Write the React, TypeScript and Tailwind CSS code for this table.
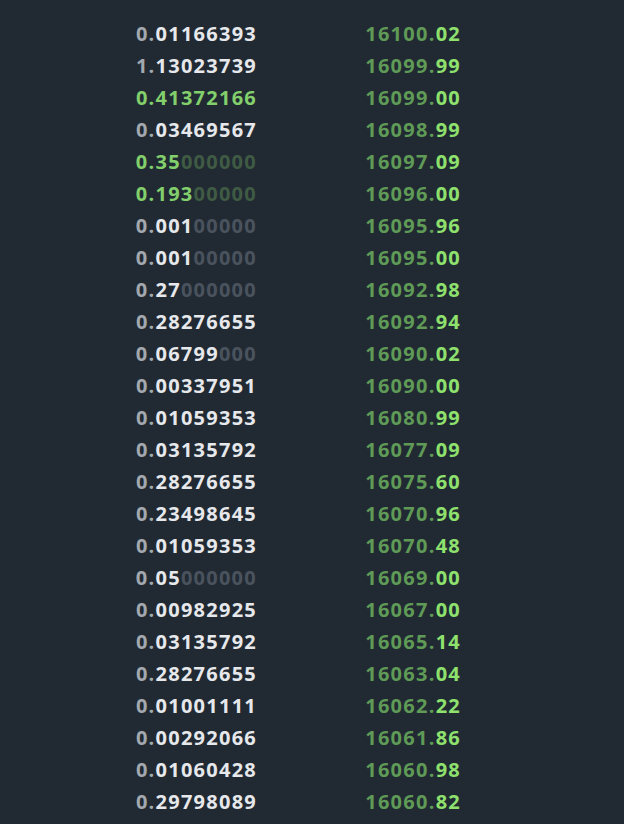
import React from 'react'

type Row = { amount: string; price: string; buy?: boolean }

const rows: Row[] = [
  { amount: '0.01166393', price: '16100.02' },
  { amount: '1.13023739', price: '16099.99' },
  { amount: '0.41372166', price: '16099.00', buy: true },
  { amount: '0.03469567', price: '16098.99' },
  { amount: '0.35000000', price: '16097.09', buy: true },
  { amount: '0.19300000', price: '16096.00', buy: true },
  { amount: '0.00100000', price: '16095.96' },
  { amount: '0.00100000', price: '16095.00' },
  { amount: '0.27000000', price: '16092.98' },
  { amount: '0.28276655', price: '16092.94' },
  { amount: '0.06799000', price: '16090.02' },
  { amount: '0.00337951', price: '16090.00' },
  { amount: '0.01059353', price: '16080.99' },
  { amount: '0.03135792', price: '16077.09' },
  { amount: '0.28276655', price: '16075.60' },
  { amount: '0.23498645', price: '16070.96' },
  { amount: '0.01059353', price: '16070.48' },
  { amount: '0.05000000', price: '16069.00' },
  { amount: '0.00982925', price: '16067.00' },
  { amount: '0.03135792', price: '16065.14' },
  { amount: '0.28276655', price: '16063.04' },
  { amount: '0.01001111', price: '16062.22' },
  { amount: '0.00292066', price: '16061.86' },
  { amount: '0.01060428', price: '16060.98' },
  { amount: '0.29798089', price: '16060.82' },
]

function Amount({ value, buy }: { value: string; buy?: boolean }) {
  const [int, dec] = value.split('.')
  const trimmed = dec.replace(/0+$/, '')
  // full 8-digit fractions keep their zeros, only padded ones are dimmed
  const padded = trimmed.length < 6
  const shown = padded ? trimmed : dec
  const dimmed = padded ? dec.slice(trimmed.length) : ''

  if (buy) {
    return (
      <span>
        <span className="text-[#82cf6c]">{int}.{shown}</span>
        <span className="text-[#3f5b43]">{dimmed}</span>
      </span>
    )
  }
  return (
    <span>
      <span className="text-[#a2a8ae]">{int}.</span>
      <span className="text-[#e6e8eb]">{shown}</span>
      <span className="text-[#4a535d]">{dimmed}</span>
    </span>
  )
}

function Price({ value }: { value: string }) {
  const [int, dec] = value.split('.')
  return (
    <span>
      <span className="text-[#5f9a56]">{int}.</span>
      <span className="text-[#8fe16e]">{dec}</span>
    </span>
  )
}

export default function App() {
  return (
    <div className="min-h-[824px] w-full bg-[#212a33] pt-[18px] font-['Open_Sans',sans-serif] text-[20px] font-bold tracking-[1.25px]">
      {rows.map((r, i) => (
        <div key={i} className="flex h-8 items-center leading-8">
          <div className="w-[257px] shrink-0 text-right">
            <Amount value={r.amount} buy={r.buy} />
          </div>
          <div className="w-[204px] shrink-0 text-right">
            <Price value={r.price} />
          </div>
        </div>
      ))}
    </div>
  )
}
